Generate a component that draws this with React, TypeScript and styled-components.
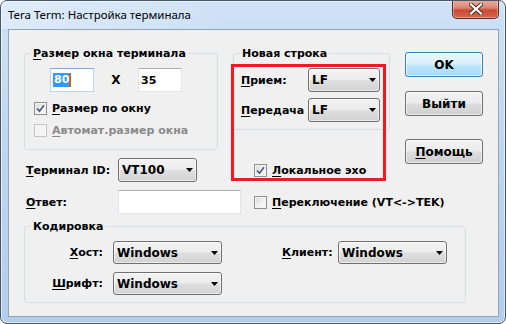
import React from 'react';
import styled, { createGlobalStyle } from 'styled-components';

const Global = createGlobalStyle`
  html, body { margin: 0; padding: 0; background: #ffffff; }
  body { font-family: "DejaVu Sans", Verdana, sans-serif; }
  * { box-sizing: border-box; }
`;

const Window = styled.div`
  width: 506px;
  height: 324px;
  border: 1px solid #46576a;
  border-radius: 7px;
  background: linear-gradient(180deg, #cfe2f6 0%, #bed7f0 45%, #b3ceeb 100%);
  display: flex;
  flex-direction: column;
  overflow: hidden;
  box-shadow: inset 0 0 0 1px rgba(255, 255, 255, 0.55);
`;

const TitleBar = styled.div`
  height: 28px;
  flex: none;
  display: flex;
  justify-content: space-between;
  align-items: flex-start;
  padding-left: 7px;
  padding-right: 6px;
  background: linear-gradient(90deg, rgba(255, 255, 255, 0.35), rgba(255, 255, 255, 0) 45%);
`;

const Title = styled.div`
  font-family: "Noto Sans", "Open Sans", sans-serif;
  font-size: 11.5px;
  line-height: 16px;
  color: #000;
  margin-top: 6px;
`;

const CloseButton = styled.div`
  width: 47px;
  height: 19px;
  margin-top: -1px;
  border: 1px solid #5e2a22;
  border-top: none;
  border-radius: 0 0 5px 5px;
  background: linear-gradient(180deg, #eab0a2 0%, #dc8370 45%, #c94a32 55%, #d4654a 100%);
  box-shadow: inset 0 0 0 1px rgba(255, 255, 255, 0.35);
  display: flex;
  align-items: center;
  justify-content: center;
`;

const Client = styled.div`
  flex: 1;
  margin: 0 6px 6px 7px;
  border: 1px solid #8fa3ba;
  background: #f0f0f0;
  display: flex;
  flex-direction: column;
  font-family: "DejaVu Sans", Verdana, sans-serif;
  font-weight: bold;
  font-size: 11px;
  color: #000;
`;

const Upper = styled.div`
  display: flex;
  padding: 17px 0 0 15px;
`;

const LeftCol = styled.div`
  position: relative;
  width: 366px;
  display: flex;
  flex-direction: column;
`;

const TopGroups = styled.div`
  display: flex;
  align-items: flex-start;
  gap: 15px;
`;

const GroupBox = styled.fieldset<{ $w: number }>`
  width: ${(p) => p.$w}px;
  min-width: 0;
  margin: 0;
  padding: 0;
  border: 1px solid #d5dfe5;
  border-radius: 3px;
`;

const Legend = styled.legend`
  margin-left: 6px;
  padding: 0 2px;
  line-height: 13px;
  white-space: nowrap;
`;

const U = styled.span`
  text-decoration: underline;
  text-underline-offset: 2px;
`;

const SizeContent = styled.div`
  padding: 8px 0 12px 9px;
  display: flex;
  flex-direction: column;
  gap: 9px;
`;

const SizeRow = styled.div`
  display: flex;
  align-items: center;
  padding-left: 16px;
  margin-bottom: 1px;
`;

const Times = styled.div`
  width: 44px;
  text-align: center;
  font-size: 12px;
`;

const TextBox = styled.div<{ $w: number; $focused?: boolean }>`
  width: ${(p) => p.$w}px;
  height: 24px;
  background: #fff;
  border: 1px solid ${(p) => (p.$focused ? '#b8d3ee' : '#e2e3ea')};
  border-top-color: ${(p) => (p.$focused ? '#7aa9da' : '#abadb3')};
  display: flex;
  align-items: center;
  padding-left: 2px;
`;

const Selected = styled.span`
  background: #3399ff;
  color: #fff;
  line-height: 14px;
  padding: 0 0 0 1px;
`;

const Caret = styled.span`
  width: 2px;
  height: 14px;
  background: #cc6a14;
`;

const CheckRow = styled.div<{ $disabled?: boolean }>`
  display: flex;
  align-items: center;
  gap: 5px;
  line-height: 13px;
  color: ${(p) => (p.$disabled ? '#8a8a8a' : '#000')};
  white-space: nowrap;
`;

const Box = styled.span<{ $disabled?: boolean }>`
  width: 13px;
  height: 13px;
  flex: none;
  border: 1px solid ${(p) => (p.$disabled ? '#c4c4c4' : '#8e8f8f')};
  background: ${(p) =>
    p.$disabled
      ? '#f4f4f4'
      : 'linear-gradient(135deg, #d8d8d8 0%, #f2f2f2 60%, #ffffff 100%)'};
  box-shadow: inset 0 0 0 1px ${(p) => (p.$disabled ? '#f7f7f7' : '#f4f4f4')};
  display: flex;
  align-items: center;
  justify-content: center;
`;

const NewLineContent = styled.div`
  padding: 8px 0 7px 7px;
  display: flex;
  flex-direction: column;
  gap: 6px;
`;

const FieldRow = styled.div`
  display: flex;
  align-items: center;
  gap: 4px;
`;

const ClipLabel = styled.div<{ $w: number }>`
  width: ${(p) => p.$w}px;
  overflow: hidden;
  white-space: nowrap;
  line-height: 13px;
`;

const Combo = styled.div<{ $w: number; $h?: number }>`
  width: ${(p) => p.$w}px;
  height: ${(p) => p.$h ?? 24}px;
  flex: none;
  border: 1px solid #707070;
  border-radius: 3px;
  background: linear-gradient(180deg, #f3f3f3 0%, #ececec 48%, #dfdfdf 52%, #d2d2d2 100%);
  box-shadow: inset 0 0 0 1px rgba(255, 255, 255, 0.55);
  display: flex;
  align-items: center;
  justify-content: space-between;
  padding: 0 3px 0 3px;
  font-size: 12px;
  white-space: nowrap;
`;

const Rows = styled.div`
  margin-top: 8px;
  padding-left: 2px;
  display: grid;
  grid-template-columns: 92px 123px auto;
  row-gap: 8px;
  align-items: center;
`;

const RowLabel = styled.div`
  line-height: 13px;
  white-space: nowrap;
`;

const RightCheck = styled.div`
  margin-left: 13px;
`;

const Annotation = styled.div`
  position: absolute;
  left: 207px;
  top: 17px;
  width: 155px;
  height: 117px;
  border: 3px solid #ed1c24;
  pointer-events: none;
`;

const ButtonCol = styled.div`
  margin-left: 15px;
  padding-top: 5px;
  display: flex;
  flex-direction: column;
`;

const Button = styled.div<{ $primary?: boolean; $gap?: number }>`
  width: 78px;
  height: 25px;
  margin-top: ${(p) => p.$gap ?? 0}px;
  border: 1px solid ${(p) => (p.$primary ? '#3c7fb1' : '#707070')};
  border-radius: 3px;
  background: ${(p) =>
    p.$primary
      ? 'linear-gradient(180deg, #eaf6fd 0%, #d9f0fc 48%, #bee6fd 52%, #a7d9f5 100%)'
      : 'linear-gradient(180deg, #f2f2f2 0%, #ebebeb 48%, #dddddd 52%, #cfcfcf 100%)'};
  box-shadow: inset 0 0 0 1px ${(p) => (p.$primary ? 'rgba(255,255,255,0.7)' : 'rgba(255,255,255,0.6)')};
  display: flex;
  align-items: center;
  justify-content: center;
  font-size: 12px;
`;

const Encoding = styled(GroupBox)`
  margin: 6px 0 0 15px;
`;

const EncGrid = styled.div`
  padding: 8px 0 7px 0;
  display: grid;
  grid-template-columns: 83px 109px 65px 51px 109px;
  column-gap: 0;
  row-gap: 8px;
  align-items: center;
`;

const EncLabel = styled.div<{ $align?: 'right' | 'left' }>`
  text-align: ${(p) => p.$align ?? 'right'};
  padding-right: ${(p) => (p.$align === 'left' ? 0 : 5)}px;
  line-height: 13px;
  white-space: nowrap;
`;

const EncCombo = styled.div<{ $col: number }>`
  grid-column: ${(p) => p.$col};
  margin-left: ${(p) => (p.$col === 5 ? 5 : 5)}px;
`;

const Arrow = () => (
  <svg width="7" height="4" viewBox="0 0 7 4">
    <polygon points="0,0 7,0 3.5,4" fill="#000" />
  </svg>
);

const Check = () => (
  <svg width="9" height="9" viewBox="0 0 9 9">
    <path d="M1 4.5 L3.5 7.2 L8 1.2" fill="none" stroke="#4a5c86" strokeWidth="1.7" />
  </svg>
);

const CheckBox = ({
  checked,
  disabled,
  children,
}: {
  checked?: boolean;
  disabled?: boolean;
  children: React.ReactNode;
}) => (
  <CheckRow $disabled={disabled}>
    <Box $disabled={disabled}>{checked && <Check />}</Box>
    <span>{children}</span>
  </CheckRow>
);

const Select = ({ w, h, value }: { w: number; h?: number; value: string }) => (
  <Combo $w={w} $h={h}>
    <span>{value}</span>
    <Arrow />
  </Combo>
);

export default function App() {
  return (
    <>
      <Global />
      <Window>
        <TitleBar>
          <Title>Tera Term: Настройка терминала</Title>
          <CloseButton>
            <svg width="14" height="12" viewBox="0 0 14 12">
              <path
                d="M2 1.5 L12 10.5 M12 1.5 L2 10.5"
                stroke="#4a2a24"
                strokeWidth="4"
                strokeLinecap="square"
              />
              <path
                d="M2 1.5 L12 10.5 M12 1.5 L2 10.5"
                stroke="#ffffff"
                strokeWidth="2.2"
                strokeLinecap="square"
              />
            </svg>
          </CloseButton>
        </TitleBar>
        <Client>
          <Upper>
            <LeftCol>
              <TopGroups>
                <GroupBox $w={194}>
                  <Legend>
                    <U>Р</U>азмер окна терминала
                  </Legend>
                  <SizeContent>
                    <SizeRow>
                      <TextBox $w={44} $focused>
                        <Selected>80</Selected>
                        <Caret />
                      </TextBox>
                      <Times>X</Times>
                      <TextBox $w={44}>35</TextBox>
                    </SizeRow>
                    <CheckBox checked>
                      <U>Р</U>азмер по окну
                    </CheckBox>
                    <CheckBox disabled>
                      <U>А</U>втомат.размер окна
                    </CheckBox>
                  </SizeContent>
                </GroupBox>
                <GroupBox $w={157}>
                  <Legend>Новая строка</Legend>
                  <NewLineContent>
                    <FieldRow>
                      <ClipLabel $w={63}>
                        <U>П</U>рием:
                      </ClipLabel>
                      <Select w={72} value="LF" />
                    </FieldRow>
                    <FieldRow>
                      <ClipLabel $w={63}>
                        <U>П</U>ередача:
                      </ClipLabel>
                      <Select w={72} value="LF" />
                    </FieldRow>
                  </NewLineContent>
                </GroupBox>
              </TopGroups>
              <Rows>
                <RowLabel>
                  <U>Т</U>ерминал ID:
                </RowLabel>
                <Select w={79} value="VT100" />
                <RightCheck>
                  <CheckBox checked>
                    <U>Л</U>окальное эхо
                  </CheckBox>
                </RightCheck>
                <RowLabel>
                  <U>О</U>твет:
                </RowLabel>
                <TextBox $w={123} />
                <RightCheck>
                  <CheckBox>
                    <U>П</U>ереключение (VT&lt;-&gt;TEK)
                  </CheckBox>
                </RightCheck>
              </Rows>
              <Annotation />
            </LeftCol>
            <ButtonCol>
              <Button $primary>OK</Button>
              <Button $gap={14}>Выйти</Button>
              <Button $gap={23}>
                <U>П</U>омощь
              </Button>
            </ButtonCol>
          </Upper>
          <Encoding as="fieldset" $w={442}>
            <Legend>Кодировка</Legend>
            <EncGrid>
              <EncLabel>
                <U>Х</U>ост:
              </EncLabel>
              <EncCombo $col={2}>
                <Select w={109} h={23} value="Windows" />
              </EncCombo>
              <EncLabel $align="left" style={{ gridColumn: 4 }}>
                <U>К</U>лиент:
              </EncLabel>
              <EncCombo $col={5}>
                <Select w={109} h={23} value="Windows" />
              </EncCombo>
              <EncLabel>
                <U>Ш</U>рифт:
              </EncLabel>
              <EncCombo $col={2}>
                <Select w={109} h={23} value="Windows" />
              </EncCombo>
            </EncGrid>
          </Encoding>
        </Client>
      </Window>
    </>
  );
}
